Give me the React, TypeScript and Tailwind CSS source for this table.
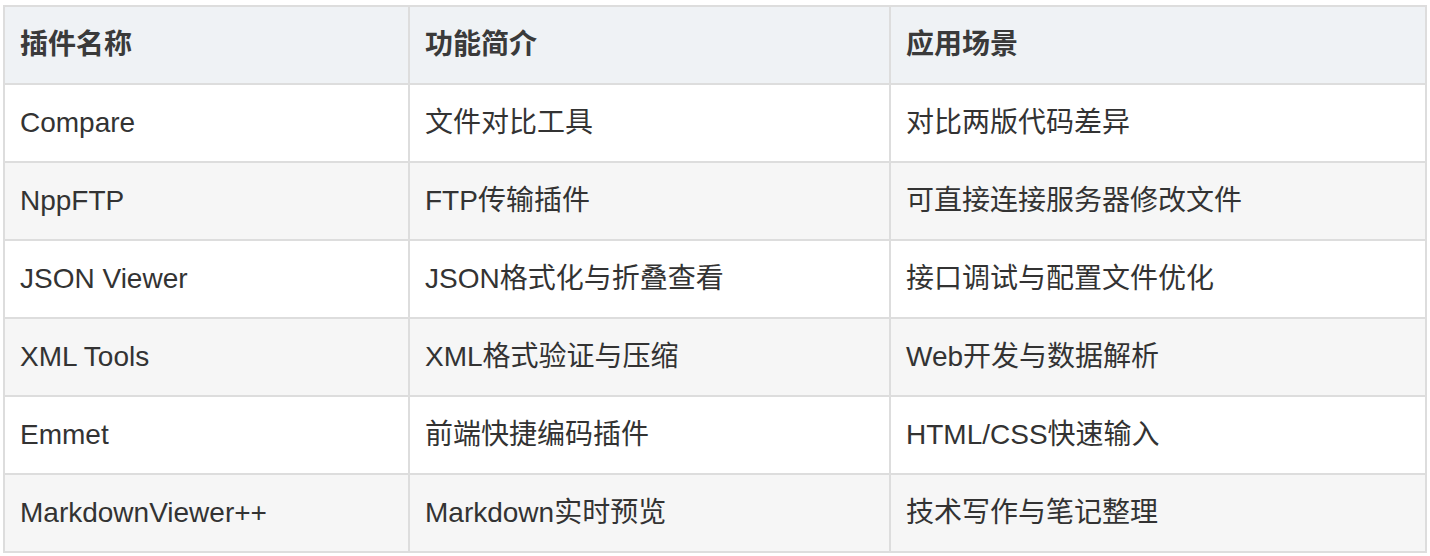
import React from "react";

const rows: [string, string, string][] = [
  ["Compare", "文件对比工具", "对比两版代码差异"],
  ["NppFTP", "FTP传输插件", "可直接连接服务器修改文件"],
  ["JSON Viewer", "JSON格式化与折叠查看", "接口调试与配置文件优化"],
  ["XML Tools", "XML格式验证与压缩", "Web开发与数据解析"],
  ["Emmet", "前端快捷编码插件", "HTML/CSS快速输入"],
  ["MarkdownViewer++", "Markdown实时预览", "技术写作与笔记整理"],
];

const headers = ["插件名称", "功能简介", "应用场景"];

export default function App() {
  return (
    <div
      className="w-[1430px] h-[556px] bg-white pl-[3px] pt-[5px]"
      style={{ fontFamily: '"Liberation Sans", Arial, "Noto Sans CJK SC", sans-serif' }}
    >
      <div className="w-[1424px] bg-[#dddddd] p-[2px] grid grid-cols-[403px_479px_534px] gap-[2px]">
        {headers.map((h) => (
          <div
            key={h}
            className="h-[76px] bg-[#eff2f5] flex items-center pl-[15px] text-[28px] font-bold text-[#3a3a3a]"
          >
            {h}
          </div>
        ))}
        {rows.map((r, i) =>
          r.map((c, j) => (
            <div
              key={`${i}-${j}`}
              className={`h-[76px] flex items-center pl-[15px] text-[28px] text-[#333333] ${
                i % 2 === 1 ? "bg-[#f6f6f6]" : "bg-white"
              }`}
            >
              {c}
            </div>
          ))
        )}
      </div>
    </div>
  );
}
